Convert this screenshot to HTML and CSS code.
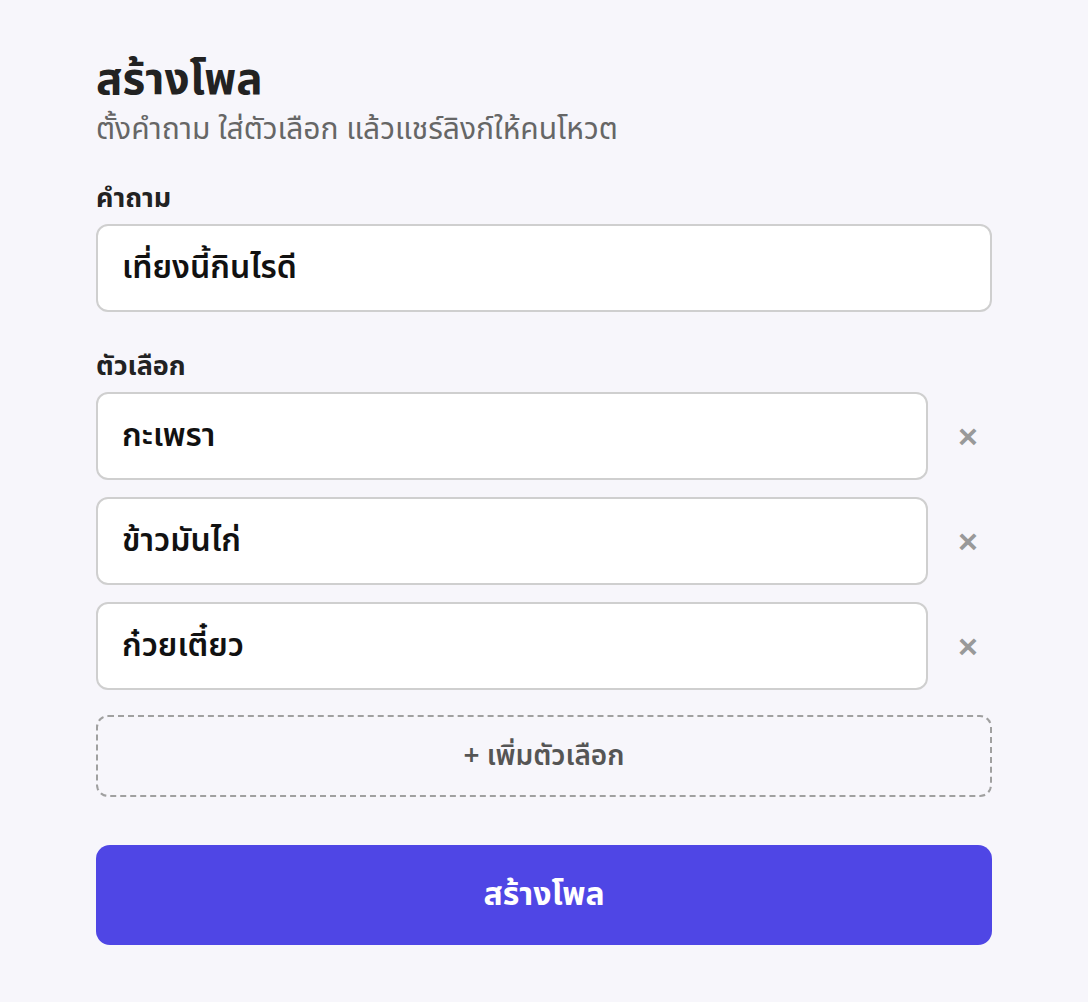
FILE: index.html
```html
<!DOCTYPE html>
<html lang="th">
  <head>
    <meta charset="UTF-8" />
    <meta name="viewport" content="width=device-width, initial-scale=1.0" />
    <title>สร้างโพล</title>
    <link rel="stylesheet" href="styles.css">
  </head>
  <body>
    <main class="poll">
      <h1 class="title">สร้างโพล</h1>
      <p class="subtitle">ตั้งคำถาม ใส่ตัวเลือก แล้วแชร์ลิงก์ให้คนโหวต</p>

      <label class="label" for="question">คำถาม</label>
      <input id="question" class="field" type="text" value="เที่ยงนี้กินไรดี" />

      <label class="label label-options">ตัวเลือก</label>
      <div class="options">
        <div class="option">
          <input class="field" type="text" value="กะเพรา" />
          <button class="remove" type="button">&times;</button>
        </div>
        <div class="option">
          <input class="field" type="text" value="ข้าวมันไก่" />
          <button class="remove" type="button">&times;</button>
        </div>
        <div class="option">
          <input class="field" type="text" value="ก๋วยเตี๋ยว" />
          <button class="remove" type="button">&times;</button>
        </div>
      </div>

      <button class="add" type="button">+ เพิ่มตัวเลือก</button>
      <button class="submit" type="submit">สร้างโพล</button>
    </main>
  </body>
</html>
```

FILE: styles.css
```css
* {
  box-sizing: border-box;
}
body {
  margin: 0;
  background-color: #f7f6fb;
  font-family: "Noto Sans", "Noto Sans Thai", sans-serif;
  color: #222;
}
.poll {
  display: flex;
  flex-direction: column;
  width: 896px;
  margin: 0 auto;
  padding-top: 46px;
}
.title {
  margin: 0;
  font-size: 44px;
  font-weight: 700;
  line-height: 62px;
}
.subtitle {
  margin: 0 0 32px;
  font-size: 30px;
  color: #666;
  line-height: 39px;
}
.label {
  font-size: 27px;
  font-weight: 700;
  line-height: 36px;
  margin-bottom: 9px;
}
.label-options {
  margin-top: 35px;
}
.field {
  width: 100%;
  height: 88px;
  padding: 0 24px;
  border: 2px solid #cfcfcf;
  border-radius: 12px;
  background: #fff;
  font-family: inherit;
  font-size: 32px;
  font-weight: 600;
  color: #111;
  outline: none;
}
.options {
  display: flex;
  flex-direction: column;
  gap: 17px;
}
.option {
  display: flex;
  gap: 16px;
  align-items: center;
}
.remove {
  flex: 0 0 48px;
  height: 48px;
  border: none;
  background: none;
  color: #999;
  font-size: 34px;
  font-weight: 700;
  cursor: pointer;
}
.add {
  margin-top: 25px;
  height: 82px;
  border: 2px dashed #a0a0a0;
  border-radius: 12px;
  background: none;
  font-family: inherit;
  font-size: 28px;
  font-weight: 600;
  color: #555;
  cursor: pointer;
}
.submit {
  margin-top: 48px;
  height: 100px;
  border: none;
  border-radius: 14px;
  background-color: #4f46e5;
  color: #fff;
  font-family: inherit;
  font-size: 32px;
  font-weight: 700;
  cursor: pointer;
}
```
